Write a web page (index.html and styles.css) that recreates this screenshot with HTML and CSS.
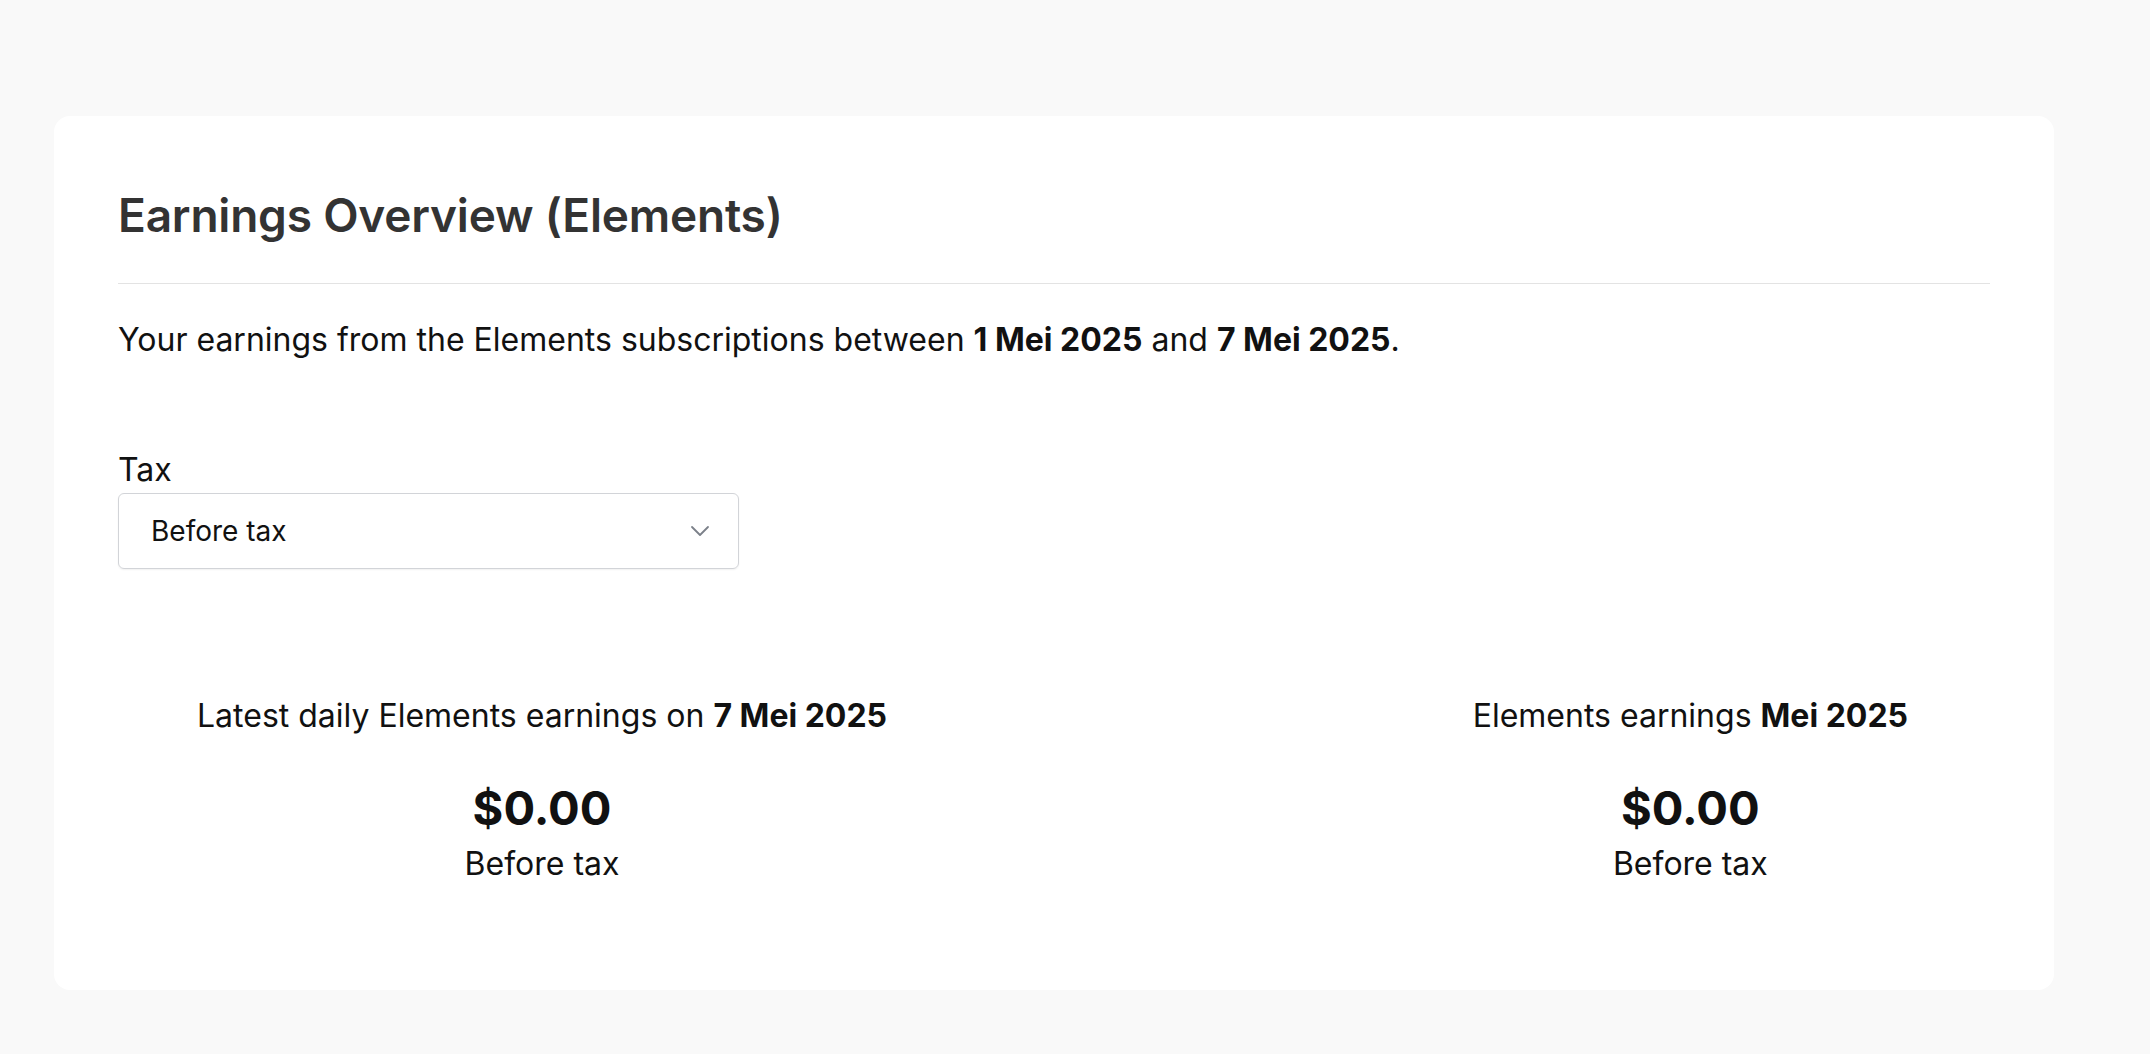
FILE: index.html
```html
<!DOCTYPE html>
<html lang="en">
<head>
    <meta charset="UTF-8">
    <title>Earnings Overview</title>
    <link rel="stylesheet" href="styles.css">
</head>
<body>

    <div class="page">
        <div class="card">
            <h1 class="card-title">Earnings Overview (Elements)</h1>
            <hr class="divider">
            <p class="intro">Your earnings from the Elements subscriptions between <strong>1 Mei 2025</strong> and <strong>7 Mei 2025</strong>.</p>

            <div class="field">
                <label class="field-label" for="tax">Tax</label>
                <div class="select" id="tax">
                    <span class="select-value">Before tax</span>
                    <svg class="select-chevron" width="20" height="12" viewBox="0 0 20 12" fill="none">
                        <path d="M2 2 L10 10 L18 2" stroke="#7b8089" stroke-width="1.8" stroke-linecap="round" stroke-linejoin="round"/>
                    </svg>
                </div>
            </div>

            <div class="stats">
                <div class="stat">
                    <div class="stat-title">Latest daily Elements earnings on <strong>7 Mei 2025</strong></div>
                    <div class="stat-amount">$0.00</div>
                    <div class="stat-note">Before tax</div>
                </div>
                <div class="stat">
                    <div class="stat-title">Elements earnings <strong>Mei 2025</strong></div>
                    <div class="stat-amount">$0.00</div>
                    <div class="stat-note">Before tax</div>
                </div>
            </div>
        </div>
    </div>

</body>
</html>
```

FILE: styles.css
```css
body {
    font-family: Inter, "Noto Sans", sans-serif;
    background-color: #f9f9f9;
    margin: 0;
    padding: 0;
    color: #111;
}

.page {
    padding: 116px 96px 64px 54px;
}

.card {
    background-color: #ffffff;
    border-radius: 16px;
    padding: 71px 64px 106px 64px;
}

.card-title {
    margin: 0;
    font-size: 46px;
    font-weight: 600;
    line-height: 56px;
    color: #333333;
    letter-spacing: -0.2px;
}

.divider {
    border: 0;
    border-top: 1px solid #e3e3e3;
    margin: 40px 0 0 0;
}

.intro {
    margin: 36px 0 0 0;
    font-size: 32px;
    line-height: 40px;
}

.intro strong {
    font-weight: 700;
}

.field {
    margin-top: 90px;
}

.field-label {
    display: block;
    font-size: 32px;
    line-height: 40px;
}

.select {
    width: 621px;
    height: 76px;
    box-sizing: border-box;
    margin-top: 3px;
    padding: 0 28px 0 32px;
    border: 1px solid #d2d4d8;
    border-radius: 6px;
    box-shadow: 0 1px 2px rgba(0, 0, 0, 0.06);
    display: flex;
    align-items: center;
    justify-content: space-between;
}

.select-value {
    font-size: 28px;
}

.stats {
    display: flex;
    justify-content: space-between;
    padding: 0 82px 0 79px;
    margin-top: 127px;
}

.stat {
    text-align: center;
}

.stat-title {
    font-size: 32px;
    line-height: 40px;
}

.stat-amount {
    margin-top: 44px;
    font-size: 47px;
    font-weight: 700;
    line-height: 56px;
}

.stat-note {
    margin-top: 8px;
    font-size: 32px;
    line-height: 40px;
}
```
